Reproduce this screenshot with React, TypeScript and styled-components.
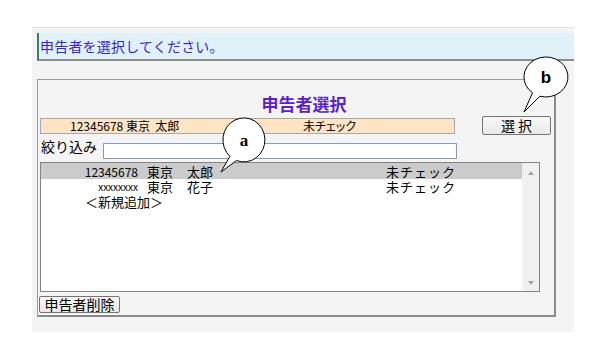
import React from "react"
import styled, {createGlobalStyle} from "styled-components"

const GlobalStyle = createGlobalStyle`
  html, body {
    margin: 0;
    padding: 0;
    background: #ffffff;
  }
  body {
    font-family: "Noto Sans CJK JP", "Noto Sans", sans-serif;
    color: #000;
  }
`

const StyledPage = styled.div`
  position: relative;
  width: 613px;
  height: 364px;
  box-sizing: border-box;
  padding: 27px 0 0 32px;
`

const StyledPanel = styled.div`
  width: 542px;
  height: 305px;
  box-sizing: border-box;
  background: #f4f4f4;
  border-top: 1px solid #e3e3e3;
  padding: 5px 0 0 5px;
  display: flex;
  flex-direction: column;
`

const StyledHeader = styled.div`
  height: 28px;
  box-sizing: border-box;
  display: flex;
  align-items: center;
  padding-left: 1px;
  background: #e0f1f9;
  border-left: 2px solid #3d7d6c;
  border-bottom: 2px solid #8c8c8c;
  color: #3c1ed6;
  font-size: 14px;
  line-height: 16px;
  letter-spacing: 0.2px;
`

const StyledFrame = styled.div`
  margin-top: 18px;
  width: 519px;
  height: 238px;
  box-sizing: border-box;
  border: 1px solid #9c9c9c;
  border-right: 2px solid #8a8a8a;
  border-bottom: 2px solid #8a8a8a;
  display: flex;
  flex-direction: column;
`

const StyledTitle = styled.div`
  height: 36px;
  box-sizing: border-box;
  padding: 14px 0 0 16px;
  text-align: center;
  font-size: 17px;
  line-height: 20px;
  font-weight: bold;
  color: #5a1fd0;
`

const StyledBarRow = styled.div`
  height: 19px;
  display: flex;
  align-items: center;
`

const StyledCurrent = styled.div`
  margin-left: 2px;
  width: 415px;
  height: 16px;
  box-sizing: border-box;
  display: flex;
  align-items: center;
  padding-left: 29px;
  background: #fde4c4;
  border: 1px solid #a8a8a8;
  font-size: 12px;
  line-height: 14px;
  font-feature-settings: "palt";
`

const StyledCurrentName = styled.span`
  width: 233px;
  white-space: pre;
`

const StyledButton = styled.button<{ $width: number, $height: number }>`
  width: ${p => p.$width}px;
  height: ${p => p.$height}px;
  box-sizing: border-box;
  padding: 0;
  border: 1px solid #747474;
  border-radius: 2px;
  background: linear-gradient(#f7f7f7, #e9e9e9);
  font-family: "Noto Sans CJK JP", sans-serif;
  font-size: 14px;
  line-height: 15px;
  color: #000;
  white-space: pre;
`

const StyledSelectButton = styled(StyledButton)`
  margin-left: auto;
  margin-right: 3px;
`

const StyledFilterRow = styled.div`
  margin-top: 8px;
  height: 16px;
  display: flex;
  align-items: flex-start;
`

const StyledLabel = styled.label`
  margin: -5px 0 0 3px;
  width: 62px;
  font-size: 14px;
  line-height: 16px;
`

const StyledInput = styled.input`
  width: 354px;
  height: 16px;
  box-sizing: border-box;
  margin: 0;
  padding: 0 2px;
  border: 1px solid #7f9db9;
  background: #fff;
  outline: none;
`

const StyledList = styled.div`
  margin: 3px 0 0 2px;
  width: 500px;
  height: 130px;
  box-sizing: border-box;
  border: 1px solid #838383;
  background: #fff;
  display: flex;
`

const StyledRows = styled.div`
  flex: 1;
  display: flex;
  flex-direction: column;
`

const StyledRow = styled.div<{ $selected?: boolean }>`
  height: ${p => p.$selected ? 16 : 15}px;
  display: flex;
  align-items: center;
  background: ${p => p.$selected ? "#cbcbcb" : "transparent"};
  font-size: 13px;
  line-height: 15px;
  white-space: pre;
`

const StyledId = styled.span<{ $small?: boolean }>`
  width: 97px;
  margin-right: 9px;
  text-align: right;
  font-size: ${p => p.$small ? 10 : 12}px;
`

const StyledSurname = styled.span`
  width: 40px;
`

const StyledGiven = styled.span`
  width: 199px;
`

const StyledStatus = styled.span`
  letter-spacing: 1px;
`

const StyledNew = styled.span`
  padding-left: 44px;
`

const StyledScrollbar = styled.div`
  width: 17px;
  background: #f0f0f0;
  display: flex;
  flex-direction: column;
  justify-content: space-between;
  align-items: center;
  padding: 8px 0 6px;
`

const StyledArrow = styled.span<{ $down?: boolean }>`
  width: 0;
  height: 0;
  border-left: 3px solid transparent;
  border-right: 3px solid transparent;
  ${p => p.$down ? "border-top: 4px solid #a3a3a3;" : "border-bottom: 4px solid #a3a3a3;"}
`

const StyledDeleteButton = styled(StyledButton)`
  margin: 4px 0 0 1px;
`

const StyledOverlay = styled.svg`
  position: absolute;
  left: 0;
  top: 0;
  pointer-events: none;
`

const StyledLetter = styled.text<{ $serif?: boolean }>`
  font-family: ${p => p.$serif ? "\"Liberation Serif\", serif" : "\"Liberation Sans\", sans-serif"};
  font-size: 17px;
  font-weight: bold;
`

const Callout: React.FC<{
    cx: number, cy: number, rx: number, ry: number,
    from: number, to: number, tip: [number, number],
    letter: string, serif?: boolean
}> = ({cx, cy, rx, ry, from, to, tip, letter, serif}) => {
    const point = (deg: number) => {
        const r = deg * Math.PI / 180
        return `${(cx + rx * Math.cos(r)).toFixed(1)} ${(cy + ry * Math.sin(r)).toFixed(1)}`
    }
    const d = `M ${point(from)} A ${rx} ${ry} 0 1 1 ${point(to)} L ${tip[0]} ${tip[1]} Z`
    return (
        <g>
            <path d={d} fill="#fff" stroke="#000" strokeWidth={1}/>
            <StyledLetter $serif={serif} x={cx} y={cy + 6} textAnchor="middle">{letter}</StyledLetter>
        </g>
    )
}

const people = [
    {id: "12345678", surname: "東京", given: "太郎", status: "未チェック", selected: true},
    {id: "xxxxxxxx", surname: "東京", given: "花子", status: "未チェック", small: true},
]

const App: React.FC = () => {
    return (
        <StyledPage>
            <GlobalStyle/>
            <StyledPanel>
                <StyledHeader>申告者を選択してください。</StyledHeader>
                <StyledFrame>
                    <StyledTitle>申告者選択</StyledTitle>
                    <StyledBarRow>
                        <StyledCurrent>
                            <StyledCurrentName>12345678 東京  太郎</StyledCurrentName>
                            <span>未チェック</span>
                        </StyledCurrent>
                        <StyledSelectButton $width={69} $height={19}>選 択</StyledSelectButton>
                    </StyledBarRow>
                    <StyledFilterRow>
                        <StyledLabel>絞り込み</StyledLabel>
                        <StyledInput/>
                    </StyledFilterRow>
                    <StyledList>
                        <StyledRows>
                            {
                                people.map(person => (
                                    <StyledRow key={person.id} $selected={person.selected}>
                                        <StyledId $small={person.small}>{person.id}</StyledId>
                                        <StyledSurname>{person.surname}</StyledSurname>
                                        <StyledGiven>{person.given}</StyledGiven>
                                        <StyledStatus>{person.status}</StyledStatus>
                                    </StyledRow>
                                ))
                            }
                            <StyledRow>
                                <StyledNew>＜新規追加＞</StyledNew>
                            </StyledRow>
                        </StyledRows>
                        <StyledScrollbar>
                            <StyledArrow/>
                            <StyledArrow $down/>
                        </StyledScrollbar>
                    </StyledList>
                    <StyledDeleteButton $width={81} $height={17}>申告者削除</StyledDeleteButton>
                </StyledFrame>
            </StyledPanel>
            <StyledOverlay width={613} height={364}>
                <Callout cx={244} cy={140} rx={21} ry={22} from={132} to={111} tip={[221, 172]} letter="a" serif/>
                <Callout cx={546} cy={77} rx={22} ry={20} from={128} to={106} tip={[524, 112]} letter="b"/>
            </StyledOverlay>
        </StyledPage>
    )
}

export default App
